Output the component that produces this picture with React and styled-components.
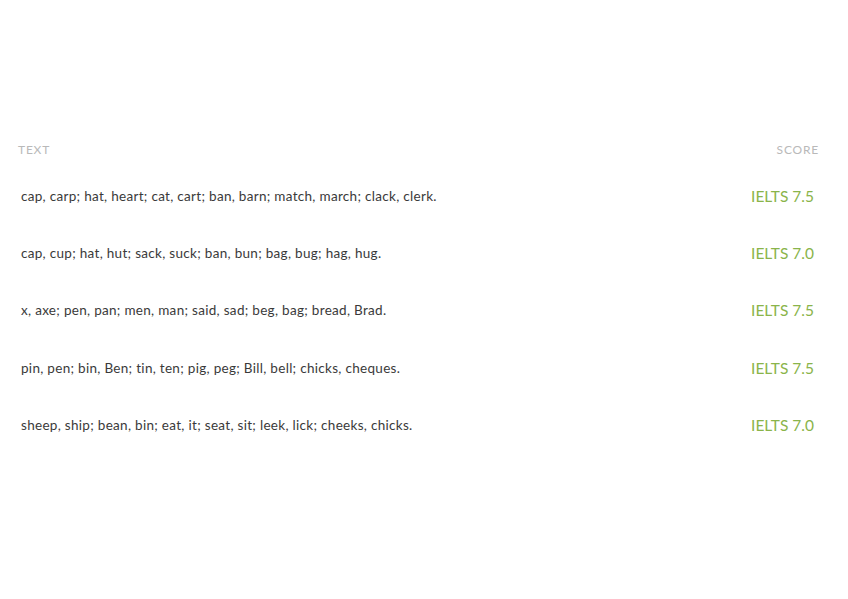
import React from "react";
import styled, { createGlobalStyle } from "styled-components";

const GlobalStyle = createGlobalStyle`
  html, body {
    margin: 0;
    padding: 0;
    background: #fff;
  }
  body {
    font-family: Lato, "Open Sans", "Liberation Sans", sans-serif;
  }
`;

const Page = styled.div`
  width: 848px;
  height: 599px;
  box-sizing: border-box;
  padding: 139px 29px 0 18px;
`;

const Table = styled.div`
  display: flex;
  flex-direction: column;
`;

const HeadRow = styled.div`
  display: flex;
  justify-content: space-between;
  align-items: center;
  height: 20px;
  font-size: 12px;
  letter-spacing: 0.8px;
  color: #b9b9b9;
  text-transform: uppercase;
`;

const Row = styled.div`
  display: flex;
  justify-content: space-between;
  align-items: center;
  height: 57.3px;
  padding: 0 5px 0 3px;
  &:first-of-type {
    margin-top: 8px;
  }
`;

const Words = styled.span`
  font-size: 13.5px;
  color: #3a3a3a;
  letter-spacing: 0.3px;
`;

const Score = styled.span`
  font-size: 15.5px;
  color: #8ab44a;
`;

const rows = [
  ["cap, carp; hat, heart; cat, cart; ban, barn; match, march; clack, clerk.", "IELTS 7.5"],
  ["cap, cup; hat, hut; sack, suck; ban, bun; bag, bug; hag, hug.", "IELTS 7.0"],
  ["x, axe; pen, pan; men, man; said, sad; beg, bag; bread, Brad.", "IELTS 7.5"],
  ["pin, pen; bin, Ben; tin, ten; pig, peg; Bill, bell; chicks, cheques.", "IELTS 7.5"],
  ["sheep, ship; bean, bin; eat, it; seat, sit; leek, lick; cheeks, chicks.", "IELTS 7.0"],
];

export default function App() {
  return (
    <>
      <GlobalStyle />
      <Page>
        <HeadRow>
          <span>Text</span>
          <span>Score</span>
        </HeadRow>
        <Table>
          {rows.map(([text, score], i) => (
            <Row key={i}>
              <Words>{text}</Words>
              <Score>{score}</Score>
            </Row>
          ))}
        </Table>
      </Page>
    </>
  );
}
